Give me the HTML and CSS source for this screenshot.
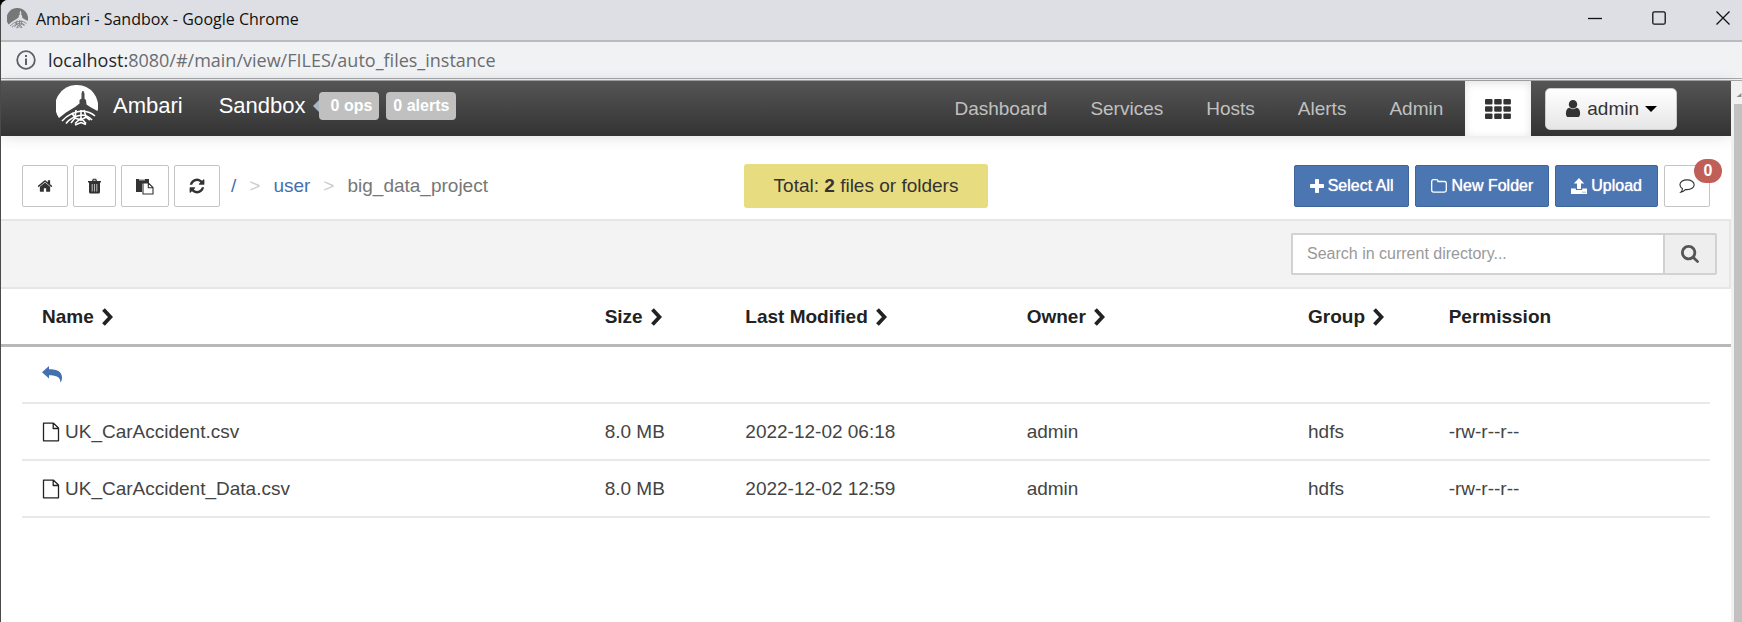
FILE: index.html
```html
<!DOCTYPE html>
<html lang="en">
<head>
<meta charset="utf-8">
<title>Ambari - Sandbox</title>
<link rel="stylesheet" href="styles.css">
</head>
<body>
<svg class="defs" aria-hidden="true">
  <symbol id="logo" viewBox="0 0 42 42">
    <path fill="currentColor" d="M21 0a21 21 0 0 1 20.500 26L35 22.500 30.500 19.500 30 15l-1.500-1.300V8.500L27.500 6h-1.200L25.500 8.500v5L23.500 15v3.500L19 22l-9 5.500L3 33A21 21 0 0 1 21 0z"/>
    <g fill="none" stroke="currentColor" stroke-width="1.600">
      <path d="M6 36q8-9 20-10 8 .5 13 5"/>
      <path d="M10 38.500q6-7.500 16-8.500 6 .5 10 5"/>
      <path d="M20 25l-1 8-4 5M25 25v8l-6 5.500M28 25l2 7 4 3M25 33l5 5.500M16 28l3 5 6 2 5-3M19 40l6-2.500 5 2"/>
    </g>
  </symbol>
  <symbol id="chevron" viewBox="0 0 12 18"><path d="M2.500 1.500L9.500 9l-7 7.500" fill="none" stroke="currentColor" stroke-width="3.800"/></symbol>
  <symbol id="file" viewBox="0 0 18 20"><path d="M1.500 1.200h10L16.500 6v12.800h-15zM11.200 1.500v5h5" fill="none" stroke="currentColor" stroke-width="1.300" stroke-linejoin="round"/></symbol>
</svg>

<header class="titlebar">
  <svg class="favicon"><use href="#logo"/></svg>
  <span class="window-title">Ambari - Sandbox - Google Chrome</span>
  <div class="window-controls">
    <button aria-label="Minimize"><svg viewBox="0 0 14 14"><path d="M0 7.500h14"/></svg></button>
    <button aria-label="Maximize"><svg viewBox="0 0 14 14"><rect x=".8" y=".8" width="12.400" height="12.400" rx="1.500"/></svg></button>
    <button aria-label="Close"><svg viewBox="0 0 14 14"><path d="M.5.5l13 13M13.500.5l-13 13"/></svg></button>
  </div>
</header>
<div class="addressbar">
  <svg class="info" viewBox="0 0 20 20"><circle cx="10" cy="10" r="8.800" fill="none" stroke="currentColor" stroke-width="1.800"/><path d="M9 5h2v2H9zM9 8.500h2V15H9z" fill="currentColor"/></svg>
  <span><span class="host">localhost:</span>8080/#/main/view/FILES/auto_files_instance</span>
</div>

<div class="viewport">
<div class="page">
  <nav class="navbar">
    <div class="identity">
      <a class="brand" href="#"><svg class="logo"><use href="#logo"/></svg>Ambari</a>
      <a class="cluster" href="#">Sandbox</a>
      <a class="label label-ops" href="#">0 ops</a>
      <a class="label" href="#">0 alerts</a>
    </div>
    <div class="menu">
      <a href="#">Dashboard</a><a href="#">Services</a><a href="#">Hosts</a><a href="#">Alerts</a><a href="#">Admin</a>
    </div>
    <button class="views" aria-label="Views"><svg viewBox="0 0 26 20"><g fill="currentColor"><rect width="7.500" height="5.500" rx="1"/><rect x="9.200" width="7.500" height="5.500" rx="1"/><rect x="18.400" width="7.500" height="5.500" rx="1"/><rect y="7.200" width="7.500" height="5.500" rx="1"/><rect x="9.200" y="7.200" width="7.500" height="5.500" rx="1"/><rect x="18.400" y="7.200" width="7.500" height="5.500" rx="1"/><rect y="14.400" width="7.500" height="5.500" rx="1"/><rect x="9.200" y="14.400" width="7.500" height="5.500" rx="1"/><rect x="18.400" y="14.400" width="7.500" height="5.500" rx="1"/></g></svg></button>
    <button class="account"><svg class="user" viewBox="256 128 1280 1536"><path fill="currentColor" d="M1536 1399q0 109-62.500 187t-150.500 78h-854q-88 0-150.500-78t-62.500-187q0-85 8.500-160.500t31.500-152 58.500-131 94-89 134.500-34.500q131 128 313 128t313-128q76 0 134.500 34.500t94 89 58.500 131 31.500 152 8.500 160.500zm-256-887q0 159-112.500 271.500t-271.500 112.500-271.500-112.500-112.500-271.500 112.500-271.500 271.500-112.500 271.500 112.500 112.500 271.500z"/></svg>admin<span class="caret"></span></button>
  </nav>

  <div class="toolbar">
    <div class="tools">
      <button class="btn" aria-label="Home"><svg class="icon" viewBox="0 0 1792 1792"><path fill="currentColor" d="M1472 992v480q0 26-19 45t-45 19h-384v-384h-256v384h-384q-26 0-45-19t-19-45v-480q0-1 .5-3t.5-3l575-474 575 474q1 2 1 6zm223-69l-62 74q-8 9-21 11h-3q-13 0-21-7l-692-577-692 577q-12 8-24 7-13-2-21-11l-62-74q-8-10-7-23.500t11-21.500l719-599q32-26 76-26t76 26l244 204v-195q0-14 9-23t23-9h192q14 0 23 9t9 23v408l219 182q10 8 11 21.500t-7 23.500z"/></svg></button>
      <button class="btn" aria-label="Trash"><svg class="icon trash" viewBox="0 0 13 16"><path fill="currentColor" d="M0 3h4l.8-2.200h3.400L9 3h4v1.600h-1V14q0 1.500-1.500 1.500h-8Q1 15.500 1 14V4.600H0z"/><path d="M4.200 6v7.500M6.500 6v7.500M8.800 6v7.500" stroke="#b5b5b5" stroke-width="1.100"/><path d="M5.300 2.800l.3-1h1.800l.3 1z" fill="#ddd"/></svg></button>
      <button class="btn" aria-label="Paste"><svg class="icon paste" viewBox="0 0 18 17"><path fill="currentColor" d="M0 1h13v4H7.500Q6 5 6 6.500V14H0z"/><path d="M3 1.800h6" stroke="#fff"/><path d="M7 5h5.500L17 9.500V16H7zM12.300 5v4.700H17" fill="#fff" stroke="currentColor" stroke-width="1.100"/></svg></button>
      <button class="btn" aria-label="Refresh"><svg class="icon" viewBox="64 64 1664 1664"><path fill="currentColor" d="M1639 1056q0 5-1 7-64 268-268 434.500t-478 166.500q-146 0-282.500-55t-243.500-157l-129 129q-19 19-45 19t-45-19-19-45v-448q0-26 19-45t45-19h448q26 0 45 19t19 45-19 45l-137 137q71 66 161 102t187 36q134 0 250-65t186-179q11-17 53-117 8-23 30-23h192q13 0 22.500 9.500t9.500 22.500zm25-800v448q0 26-19 45t-45 19h-448q-26 0-45-19t-19-45 19-45l138-138q-148-137-349-137-134 0-250 65t-186 179q-11 17-53 117-8 23-30 23h-199q-13 0-22.500-9.500t-9.500-22.500v-7q65-268 270-434.500t480-166.500q146 0 284 55.500t245 156.500l130-129q19-19 45-19t45 19 19 45z"/></svg></button>
      <div class="crumbs"><a href="#">/</a><span class="sep">&gt;</span><a href="#">user</a><span class="sep">&gt;</span><span>big_data_project</span></div>
    </div>
    <div class="total">Total: <b>2</b> files or folders</div>
    <div class="actions">
      <button class="btn primary"><svg class="icon glyph-plus" viewBox="0 0 14 14"><path fill="currentColor" d="M5 .8Q5 0 5.800 0h2.400Q9 0 9 .8V5h4.200q.8 0 .8.800v2.400q0 .8-.8.800H9v4.200q0 .8-.8.800H5.800Q5 14 5 13.200V9H.8Q0 9 0 8.200V5.800Q0 5 .8 5H5z"/></svg>Select All</button>
      <button class="btn primary"><svg class="icon" viewBox="0 0 16 14"><path d="M.7 2.500Q.7.700 2.500.7h2.800Q7 .7 7 2.500h6.500q1.800 0 1.800 1.800v7q0 1.800-1.800 1.800h-11q-1.800 0-1.800-1.800z" fill="none" stroke="currentColor" stroke-width="1.300"/></svg>New Folder</button>
      <button class="btn primary"><svg class="icon" viewBox="0 0 16 16"><path fill="currentColor" d="M8 0l5.200 5.500H10V11H6V5.500H2.800zM0 10.500h4.800V12h6.400v-1.500H16V16H0z"/><path d="M11.500 14.200h1M13.500 14.200h1" stroke="#4c76b2"/></svg>Upload</button>
      <button class="btn messages" aria-label="Messages"><svg class="icon" viewBox="0 0 17 16"><path d="M8.500 1.500c4.300 0 7.600 2.200 7.600 5.200s-3.300 5.200-7.600 5.200l-1.800-.1Q5 14 2 14.500q1.500-1.500 1.700-3.600Q1 9.300 1 6.700c0-3 3.200-5.200 7.500-5.200z" fill="none" stroke="currentColor" stroke-width="1.200"/></svg><span class="count">0</span></button>
    </div>
  </div>

  <form class="searchbar">
    <div class="search">
      <input type="text" aria-label="Search in current directory" placeholder="Search in current directory...">
      <button type="button" aria-label="Search"><svg viewBox="64 128 1664 1664"><path fill="currentColor" d="M1216 832q0-185-131.500-316.500t-316.500-131.500-316.500 131.500-131.500 316.500 131.500 316.500 316.500 131.500 316.500-131.500 131.500-316.500zm512 832q0 52-38 90t-90 38q-54 0-90-38l-343-342q-179 124-399 124-143 0-273.500-55.500t-225-150-150-225-55.500-273.500 55.500-273.500 150-225 225-150 273.500-55.500 273.500 55.500 225 150 150 225 55.500 273.500q0 220-124 399l343 343q37 37 37 90z"/></svg></button>
    </div>
  </form>

  <table class="files">
    <thead>
      <tr>
        <th>Name<svg><use href="#chevron"/></svg></th>
        <th>Size<svg><use href="#chevron"/></svg></th>
        <th>Last Modified<svg><use href="#chevron"/></svg></th>
        <th>Owner<svg><use href="#chevron"/></svg></th>
        <th>Group<svg><use href="#chevron"/></svg></th>
        <th>Permission</th>
      </tr>
    </thead>
    <tbody>
      <tr><td><a href="#" aria-label="Up one level"><svg class="reply" viewBox="0 0 20 17"><path fill="currentColor" d="M0 6.200L7 0v3.300c8 0 13 2.200 13 8.200 0 2-.5 3.600-1.500 5.300 0-5.500-3.500-7.600-11.500-7.600v3.300z"/></svg></a></td></tr>
      <tr><td><svg class="file"><use href="#file"/></svg>UK_CarAccident.csv</td><td>8.0 MB</td><td>2022-12-02 06:18</td><td>admin</td><td>hdfs</td><td>-rw-r--r--</td></tr>
      <tr><td><svg class="file"><use href="#file"/></svg>UK_CarAccident_Data.csv</td><td>8.0 MB</td><td>2022-12-02 12:59</td><td>admin</td><td>hdfs</td><td>-rw-r--r--</td></tr>
    </tbody>
  </table>
</div>
<div class="scrollbar"><svg class="scroll-up" viewBox="0 0 6 5"><path d="M6 0v5H0z" fill="#8b8b8b"/></svg><div class="thumb"></div></div>
</div>
</body>
</html>
```
FILE: styles.css
```css
* { box-sizing: border-box; }

html { background: #000; }

body {
  margin: 0;
  min-height: 100vh;
  display: flex;
  flex-direction: column;
  border-left: 1px solid #4a4a4a;
  border-top-left-radius: 8px;
  overflow: hidden;
  background: #fff;
  color: #333;
  font: 19px/24px "Liberation Sans", Arial, sans-serif;
}

button, input { font: inherit; color: inherit; margin: 0; }
button { cursor: pointer; }
a { color: #4470b0; text-decoration: none; }
svg { display: block; flex: none; }
.defs { position: absolute; width: 0; height: 0; }

/* Browser window */
.titlebar {
  display: flex;
  align-items: center;
  height: 42px;
  padding: 0 12px 4px 6px;
  background: #dedfe5;
  border-bottom: 2px solid #b9bbbf;
  font-family: "Open Sans", "Noto Sans", sans-serif;
  font-size: 16px;
  color: #111;
}
.window-title { padding-top: 2px; }
.favicon { width: 21px; height: 21px; margin-right: 8px; color: #777; }
.window-controls { display: flex; gap: 50px; margin-left: auto; }
.window-controls button { padding: 0; border: 0; background: none; }
.window-controls svg { width: 14px; height: 14px; fill: none; stroke: #111; stroke-width: 1.3; }

.addressbar {
  display: flex;
  align-items: center;
  gap: 12px;
  height: 39px;
  padding: 0 15px;
  background: #f1f2f4;
  border-bottom: 3px double #a5a7aa;
  font-family: "Open Sans", "Noto Sans", sans-serif;
  font-size: 18px;
  color: #6a6d71;
}
.info { width: 20px; height: 20px; color: #5c5f63; }
.host { color: #26282b; }

.viewport { display: flex; flex: 1; }
.page { flex: 1; min-width: 0; }
.scrollbar { width: 11px; padding: 12px 0 0 3px; background: #f1f1f1; }
.scroll-up { width: 6px; height: 4px; margin: 0 0 7px 2px; }
.thumb { height: calc(100% - 11px); background: #c1c1c1; }

/* Navigation */
.navbar {
  display: flex;
  align-items: center;
  height: 55px;
  padding: 0 54px 0 55px;
  background: linear-gradient(#555, #333);
  box-shadow: 0 1px 14px rgba(0, 0, 0, .12);
}
.navbar a { color: #fff; }
.identity { display: flex; align-items: center; padding-bottom: 6px; }
.brand { display: flex; align-items: center; gap: 15px; font-size: 22px; }
.logo { width: 42px; height: 42px; }
.cluster { margin: 0 13px 0 36px; font-size: 22px; }
.navbar .label {
  position: relative;
  margin-right: 7px;
  padding: 2px 7px;
  border-radius: 4px;
  background: #c0c0c0;
  font-size: 16px;
  font-weight: bold;
}
.navbar .label-ops { padding-left: 12px; }
.label-ops::before {
  content: "";
  position: absolute;
  left: -6px;
  top: 8px;
  border: solid transparent;
  border-width: 6px 6px 6px 0;
  border-right-color: #a9b6c4;
}
.menu { display: flex; gap: 43px; margin: 0 22px 0 auto; }
.navbar .menu a { color: #c0c0c0; }
.views {
  display: grid;
  place-items: center;
  align-self: stretch;
  width: 66px;
  border: 0;
  background: #fff;
  box-shadow: inset 0 2px 8px rgba(0, 0, 0, .12);
}
.views svg { width: 26px; height: 20px; }
.account {
  display: flex;
  align-items: center;
  height: 42px;
  margin-left: 14px;
  padding: 0 19px;
  border: 1px solid #ccc;
  border-radius: 5px;
  background: linear-gradient(#fff, #e6e6e6);
}
.user { width: 16px; height: 17px; margin-right: 6px; }
.caret { margin-left: 6px; border: solid transparent; border-width: 6px 6px 0; border-top-color: #000; }

/* File toolbar */
.toolbar {
  display: grid;
  grid-template-columns: 1fr auto 1fr;
  align-items: center;
  padding: 28px 21px 11px;
}
.tools, .actions { display: flex; align-items: center; gap: 5px; }
.actions { justify-content: flex-end; gap: 6px; }
.btn {
  display: flex;
  align-items: center;
  gap: 4px;
  height: 42px;
  padding: 0 14px;
  border: 1px solid #c4c4c4;
  border-radius: 2px;
  background: #fff;
  font-size: 16px;
}
.icon { width: 16px; height: 16px; }
.icon.trash { width: 13px; }
.icon.paste { width: 18px; height: 17px; }
.primary {
  padding: 0 15px;
  border-color: #40659b;
  background: #4c76b2;
  color: #fff;
  text-shadow: 0 0 1px #fff;
  white-space: nowrap;
}
.icon.glyph-plus { width: 14px; height: 14px; }
.messages { position: relative; }
.count {
  position: absolute;
  top: -7px;
  right: -13px;
  width: 28px;
  border-radius: 12px;
  background: #c05f57;
  color: #fff;
  font-weight: bold;
}
.crumbs { display: flex; gap: 13px; margin-left: 6px; color: #777; }
.sep { color: #ccc; }
.total {
  padding: 10px 30px;
  border-radius: 3px;
  background: #e8dc81;
}

/* Search */
.searchbar {
  display: flex;
  justify-content: flex-end;
  padding: 12px 12px 12px 0;
  border: 2px solid #e6e6e6;
  border-left: 0;
  background: #f3f3f3;
}
.search { display: flex; width: 426px; height: 42px; }
.search input {
  flex: 1;
  min-width: 0;
  padding: 0 14px;
  border: 2px solid #d2d2d2;
  border-right-width: 0;
  border-radius: 2px 0 0 2px;
  background: #fff;
  font-size: 16px;
}
.search input::placeholder { color: #999; opacity: 1; }
.search button {
  display: grid;
  place-items: center;
  width: 54px;
  padding: 0;
  border: 2px solid #d2d2d2;
  border-radius: 0 2px 2px 0;
  background: #eee;
  color: #555;
}
.search button svg { width: 18px; height: 18px; }

/* File list */
.files, .files thead, .files tbody { display: block; }
.files thead, .files tbody { padding: 0 21px; }
.files thead { border-bottom: 3px solid #b8b8b8; }
.files tr { display: grid; grid-template-columns: 4fr 1fr 2fr 2fr 1fr 2fr; }
.files tbody tr { border-bottom: 2px solid #e9e9e9; }
.files th, .files td {
  display: flex;
  align-items: center;
  height: 55px;
  padding: 0 0 0 20px;
  text-align: left;
  white-space: nowrap;
}
.files th { color: #222; }
.files td { color: #444; }
.files th svg { width: 12px; height: 18px; margin-left: 7px; }
.files .reply { width: 20px; height: 17px; }
.files .file { width: 18px; height: 20px; margin-right: 5px; color: #222; }
```
